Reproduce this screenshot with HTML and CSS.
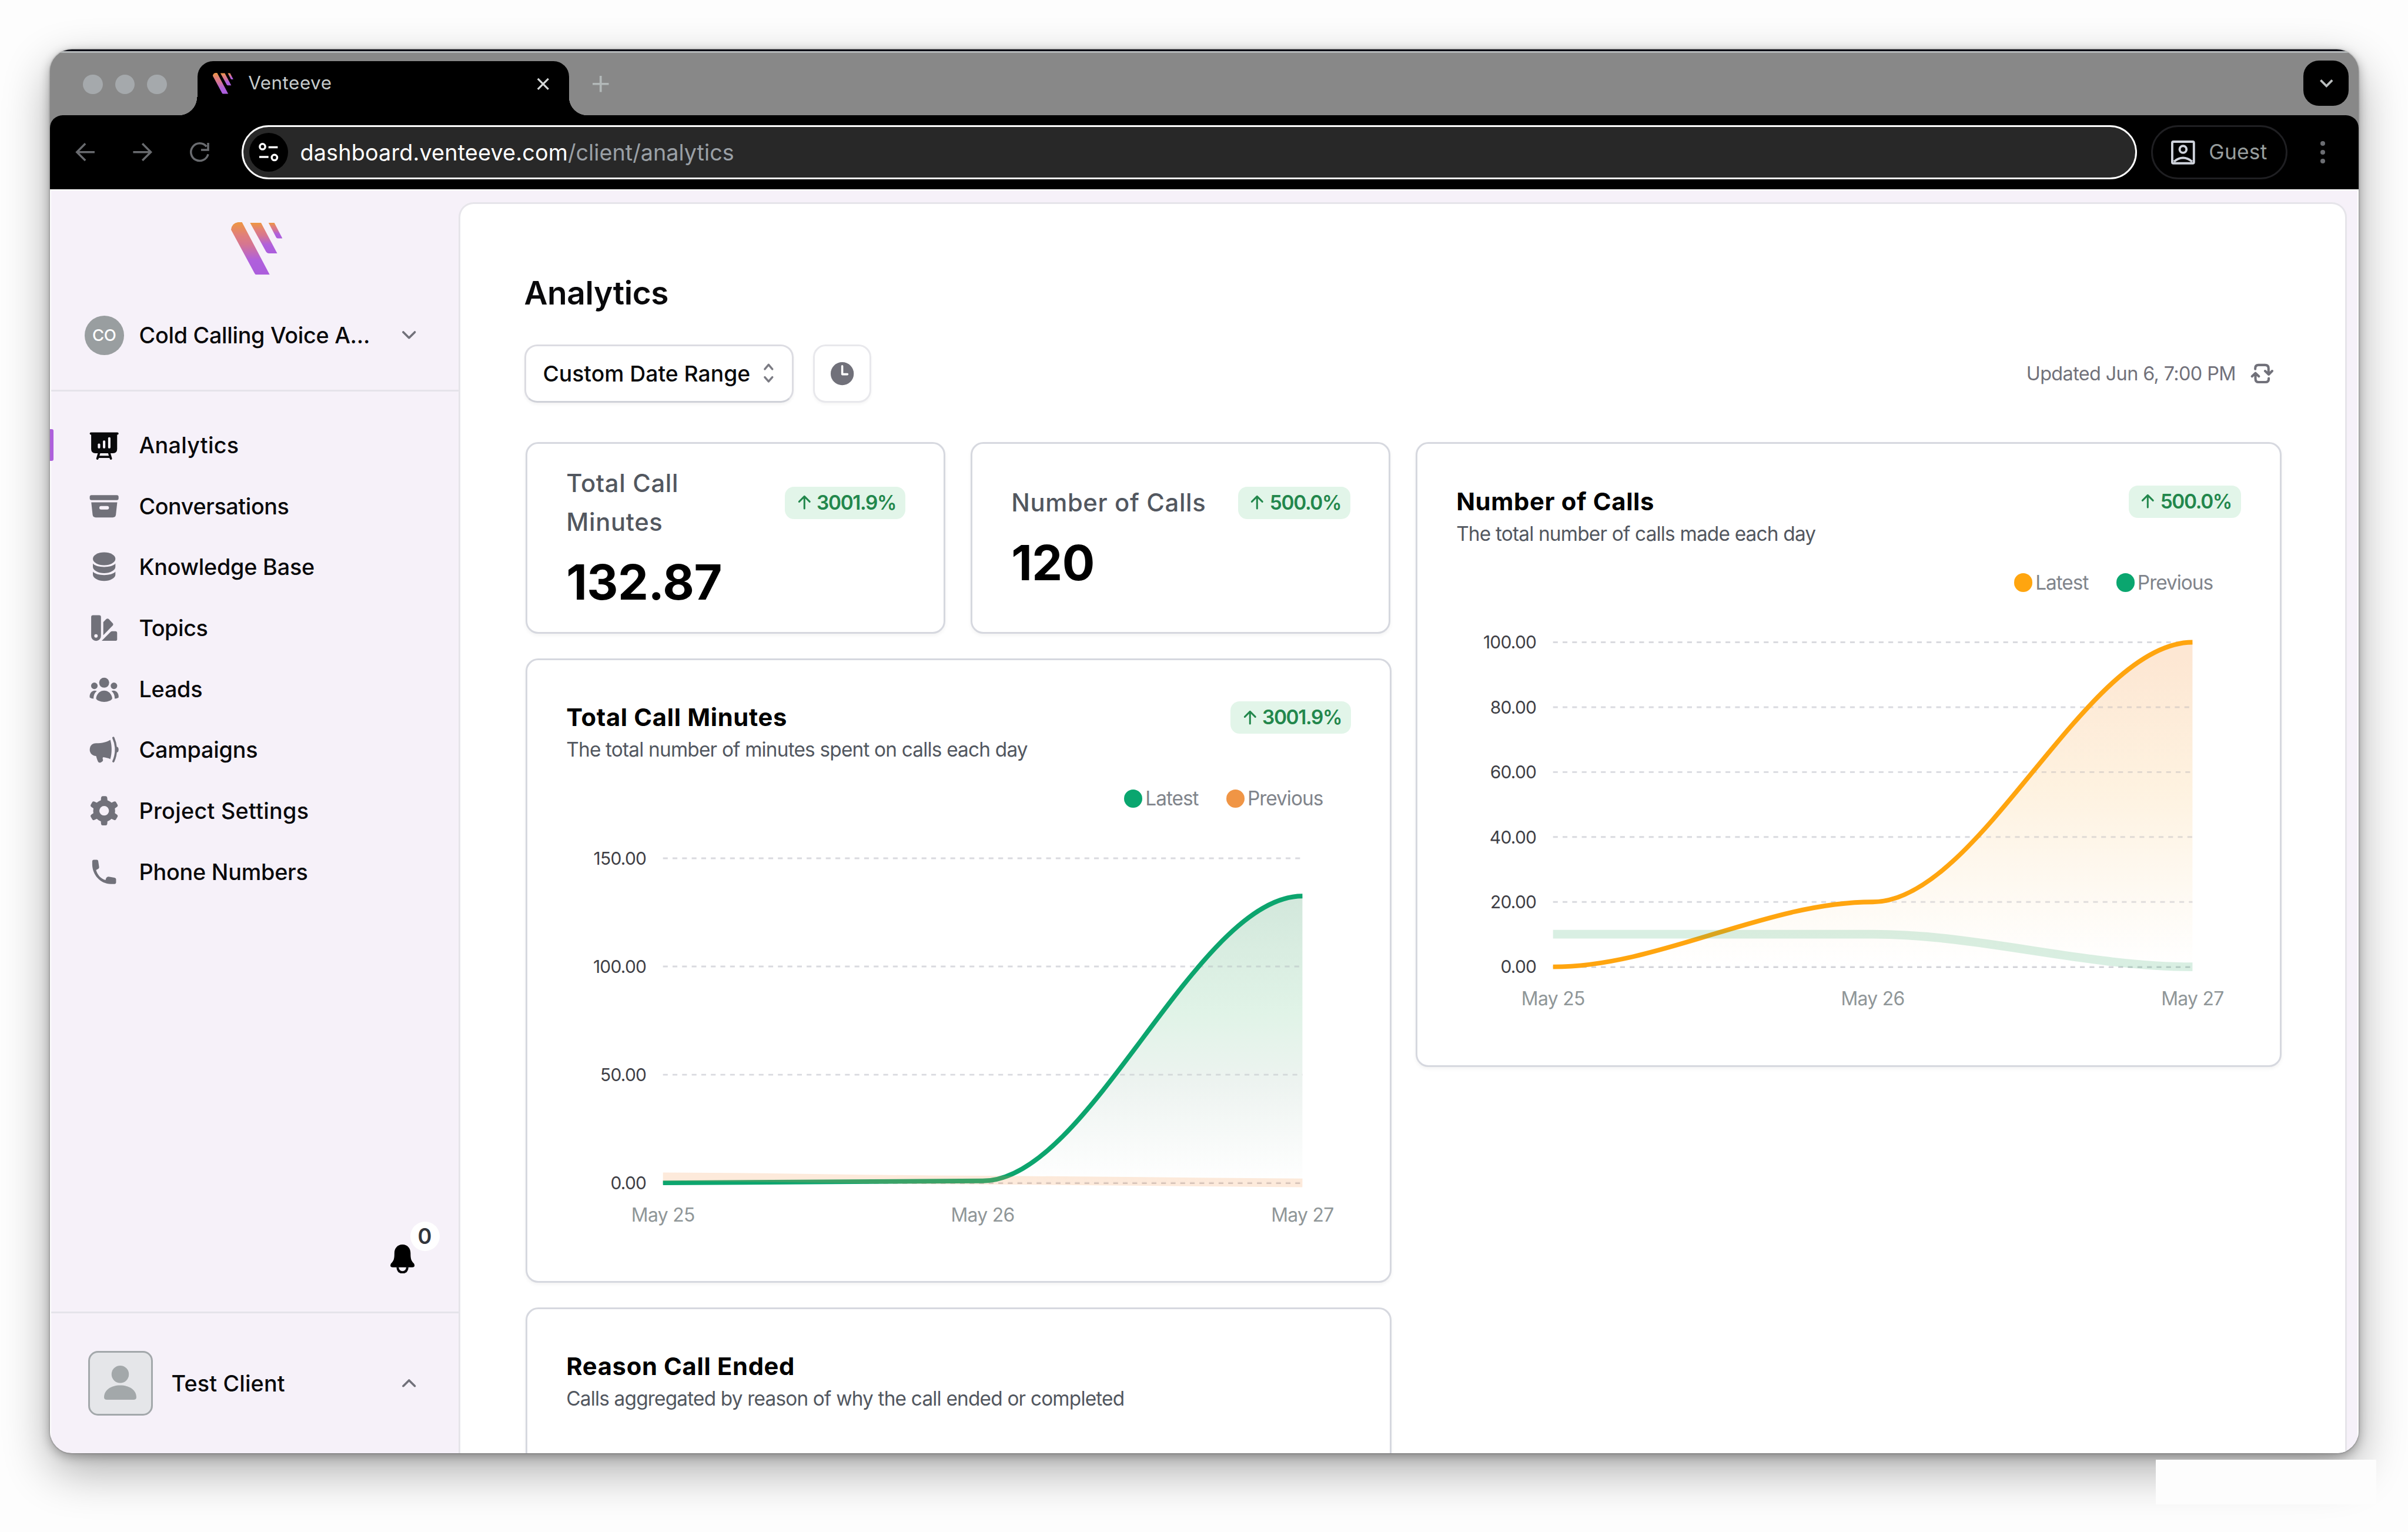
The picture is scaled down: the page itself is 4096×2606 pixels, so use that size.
FILE: index.html
```html
<!DOCTYPE html>
<html lang="en">
<head>
<meta charset="utf-8">
<title>Venteeve</title>
<link rel="stylesheet" href="styles.css">
</head>
<body>
<svg class="defs" aria-hidden="true">
  <defs>
    <linearGradient id="brand" x1="0" y1="0" x2="0" y2="1">
      <stop offset="0" stop-color="#ee9742"/><stop offset=".25" stop-color="#e07f7c"/><stop offset=".42" stop-color="#d67690"/><stop offset=".72" stop-color="#b060dc"/><stop offset="1" stop-color="#ab5ddc"/>
    </linearGradient>
    <linearGradient id="fillOrange" x1="0" y1="0" x2="0" y2="1">
      <stop offset=".05" stop-color="#fde7d3"/><stop offset=".45" stop-color="#fef2e0"/><stop offset=".75" stop-color="#fef9f1"/><stop offset="1" stop-color="#fff"/>
    </linearGradient>
    <linearGradient id="fillGreen" x1="0" y1="0" x2="0" y2="1">
      <stop offset=".02" stop-color="#d3e8dc"/><stop offset=".4" stop-color="#e0f3e7"/><stop offset=".65" stop-color="#edf3f0"/><stop offset="1" stop-color="#fff"/>
    </linearGradient>
    <symbol id="logo" viewBox="0 0 89 91">
      <path fill="url(#brand)" d="M0 13Q1 2 12 0H19L67 91H44Q42 91 40 87Z"/>
      <path fill="url(#brand)" d="M33 1H52L80 54H66Q62 54 60 50Z"/>
      <path fill="url(#brand)" d="M65 1H75L89 28H81Q79 28 78 26Z"/>
    </symbol>
    <symbol id="down" viewBox="0 0 24 14"><path d="M2 2L12 12L22 2" fill="none" stroke="currentColor" stroke-width="3.8" stroke-linecap="round" stroke-linejoin="round"/></symbol>
    <symbol id="up" viewBox="0 0 24 14"><path d="M2 12L12 2L22 12" fill="none" stroke="currentColor" stroke-width="3.8" stroke-linecap="round" stroke-linejoin="round"/></symbol>
    <symbol id="arrow-up" viewBox="0 0 24 26"><path d="M12 24V2M2.500 11.500L12 2L21.500 11.500" fill="none" stroke="currentColor" stroke-width="3.200" stroke-linecap="round" stroke-linejoin="round"/></symbol>
  </defs>
</svg>

<div class="window">
  <div class="tabstrip">
    <div class="lights"><i></i><i></i><i></i></div>
    <div class="tab">
      <svg class="tab-logo"><use href="#logo"/></svg>
      <span class="tab-title">Venteeve</span>
      <svg class="tab-close" viewBox="0 0 24 24"><path d="M2 2L22 22M22 2L2 22" stroke="#d5d8d8" stroke-width="3.600"/></svg>
    </div>
    <svg class="tab-new" viewBox="0 0 28 28"><path d="M14 0V28M0 14H28" stroke="#b2b8b8" stroke-width="3.800"/></svg>
    <div class="tab-search"><svg viewBox="0 0 24 14"><path d="M1.500 1.500L12 12L22.500 1.500" fill="none" stroke="#b9bdbe" stroke-width="4"/></svg></div>
  </div>

  <div class="toolbar">
    <svg class="nav-btn" viewBox="0 0 36 36"><path d="M35 18H3M18 2.500L2.500 18L18 33.500" fill="none" stroke="#696b6f" stroke-width="3.800"/></svg>
    <svg class="nav-btn" viewBox="0 0 36 36"><path d="M1 18H33M18 2.500L33.500 18L18 33.500" fill="none" stroke="#696b6f" stroke-width="3.800"/></svg>
    <svg class="nav-btn" viewBox="0 0 36 36"><path d="M31 8A16 16 0 1 0 34 22M34 1V14H21" fill="none" stroke="#696b6f" stroke-width="3.800"/></svg>
    <div class="url">
      <span class="site"><svg viewBox="0 0 36 34"><g fill="none" stroke="#fff" stroke-width="3.800"><circle cx="7" cy="7" r="5"/><path d="M18 8H35M1 26H18"/><circle cx="29" cy="27" r="5"/></g></svg></span>
      <span class="host">dashboard.venteeve.com</span><span class="path">/client/analytics</span>
    </div>
    <div class="guest">
      <svg viewBox="0 0 42 42"><g fill="none" stroke="#cfd3dc" stroke-width="4"><rect x="2" y="2" width="38" height="38" rx="2"/><circle cx="21" cy="15.500" r="6"/><path d="M5 37Q21 24 37 37"/></g></svg>
      <span>Guest</span>
    </div>
    <div class="dots"><i></i><i></i><i></i></div>
  </div>

  <div class="page">
    <aside class="sidebar">
      <svg class="logo"><use href="#logo"/></svg>
      <div class="project">
        <span class="initials">CO</span>
        <span class="project-name">Cold Calling Voice A...</span>
        <svg class="chev"><use href="#down"/></svg>
      </div>
      <nav class="nav">
        <a class="item active"><svg viewBox="0 0 160 160"><rect x="5" y="14" width="150" height="12" rx="6"/><path d="M12.500 20H147.500V100Q147.500 122 125.500 122H34.500Q12.500 122 12.500 100Z"/><path d="M54 120L45 150M106 120L115 150M50 141H110" fill="none" stroke="currentColor" stroke-width="12" stroke-linecap="round"/><g fill="#f6f1f9"><rect x="47" y="72" width="12.500" height="25" rx="5"/><rect x="73.500" y="56" width="12.500" height="41" rx="5"/><rect x="100.500" y="39" width="12.500" height="58" rx="5"/></g></svg><span>Analytics</span></a>
        <a class="item"><svg viewBox="0 0 160 160"><rect x="5" y="22" width="150" height="26" rx="9"/><path d="M13 60H148L141 124Q139 138 125 138H36Q22 138 20 124Z"/><rect x="55" y="79" width="50" height="18" rx="9" fill="#f6f1f9"/></svg><span>Conversations</span></a>
        <a class="item"><svg viewBox="0 0 160 160"><ellipse cx="80" cy="38" rx="58.500" ry="33.500"/><path d="M21.500 63C38 87 122 87 138.500 63V80C138.500 98 110 113 80 113S21.500 98 21.500 80Z"/><path d="M21.500 105C38 129 122 129 138.500 105V121C138.500 139 110 154 80 154S21.500 139 21.500 121Z"/></svg><span>Knowledge Base</span></a>
        <a class="item"><svg viewBox="0 0 160 160"><path d="M12.500 23Q12.500 13.500 22 13.500H54Q63.500 13.500 63.500 23V122A25.500 25.500 0 0 1 12.500 122Z"/><circle cx="37.500" cy="121.500" r="9" fill="#f6f1f9"/><path d="M75.500 50L91 34Q97.500 28 104 34L124 55Q130 61 124 68L75.500 118Z"/><path d="M67.500 147L113 101Q117 97 122 97H138Q147.500 97 147.500 106V138Q147.500 147 138 147Z"/></svg><span>Topics</span></a>
        <a class="item"><svg viewBox="0 0 160 160"><circle cx="80" cy="47" r="26"/><circle cx="29" cy="63" r="17"/><circle cx="131" cy="63" r="17"/><path d="M38 128C42 102 60 88 80 88S118 102 122 128C122 138 100 147 80 147S38 138 38 128Z"/><path d="M42 90C20 82 2 100 5 124C10 128 18 130 25 130C25 112 30 100 42 90Z"/><path d="M118 90C140 82 158 100 155 124C150 128 142 130 135 130C135 112 130 100 118 90Z"/></svg><span>Leads</span></a>
        <a class="item"><svg viewBox="0 0 160 160"><path d="M112 29C95 40 70 47 38 47C18 47 5 61 5 80C5 98 18 112 38 113C41 123 44 134 48 142C52 149 59 149 65 145C72 142 76 138 73 130C71 124 73 121 75 119C88 120 101 124 112 129C121 98 121 60 112 29Z"/><path d="M128 19Q155 80 128 141" fill="none" stroke="currentColor" stroke-width="11" stroke-linecap="round"/><ellipse cx="146" cy="80" rx="9" ry="14"/></svg><span>Campaigns</span></a>
        <a class="item"><svg viewBox="0 0 160 160"><circle cx="80" cy="80" r="57"/><g><path id="tooth" d="M58 80L64 12Q65 4 72 4H88Q95 4 96 12L102 80L96 148Q95 156 88 156H72Q65 156 64 148Z"/><use href="#tooth" transform="rotate(60 80 80)"/><use href="#tooth" transform="rotate(120 80 80)"/></g><circle cx="80" cy="80" r="25" fill="#f6f1f9"/></svg><span>Project Settings</span></a>
        <a class="item"><svg viewBox="0 0 160 160"><path d="M18 26Q18 17 27 17H42Q48 17 49 23L54 56Q54 63 46 66L38 70C45 95 62 115 87 122L90 113Q94 104 103 105L134 110Q142 112 142 118V134Q142 143 133 143H115C60 143 18 95 18 40Z"/></svg><span>Phone Numbers</span></a>
      </nav>
      <div class="alerts">
        <div class="bell">
          <svg viewBox="0 0 42 50"><path d="M21 0C12 0 7 7 7 15C7 25 6 28 1 33Q-2 39 4 39.500H38Q44 39 41 33C36 28 35 25 35 15C35 7 30 0 21 0Z"/><path d="M12.500 39Q13 48 21 48T29.500 39" fill="none" stroke="currentColor" stroke-width="4"/></svg>
          <span class="count">0</span>
        </div>
      </div>
      <div class="user">
        <span class="avatar"><svg viewBox="0 0 56 60"><circle cx="28" cy="15" r="15"/><path d="M0 55C0 42 12 34 28 34S56 42 56 55Q56 59 51 59H5Q0 59 0 55Z"/></svg></span>
        <span class="user-name">Test Client</span>
        <svg class="chev"><use href="#up"/></svg>
      </div>
    </aside>

    <main class="panel">
      <h1>Analytics</h1>
      <div class="controls">
        <div class="select"><span>Custom Date Range</span>
          <svg viewBox="0 0 17 34"><path d="M2 10L8.500 2.500L15 10M2 24L8.500 31.500L15 24" fill="none" stroke="#7b7b83" stroke-width="3.600" stroke-linecap="round" stroke-linejoin="round"/></svg>
        </div>
        <div class="clock"><svg viewBox="0 0 40 40"><circle cx="20" cy="20" r="20" fill="#71717a"/><path d="M20 7V21H29" fill="none" stroke="#fff" stroke-width="3.600" stroke-linecap="round" stroke-linejoin="round"/></svg></div>
        <div class="updated"><span>Updated Jun 6, 7:00 PM</span>
          <svg viewBox="0 0 120 120"><path d="M25 36V32Q25 15 42 15H76Q94 15 94 32V62M76 46L95 64L113 46M95 84V87Q95 104 78 104H43Q26 104 26 87V58M8 74L26 57L44 74" fill="none" stroke="#71717a" stroke-width="12.500" stroke-linecap="round" stroke-linejoin="round"/></svg>
        </div>
      </div>

      <div class="board">
        <div class="col">
          <div class="stats">
            <section class="card stat">
              <div class="stat-head"><span class="label">Total Call Minutes</span><span class="pill"><svg><use href="#arrow-up"/></svg><b>3001.9%</b></span></div>
              <div class="value">132.87</div>
            </section>
            <section class="card stat">
              <div class="stat-head"><span class="label">Number of Calls</span><span class="pill"><svg><use href="#arrow-up"/></svg><b>500.0%</b></span></div>
              <div class="value">120</div>
            </section>
          </div>

          <section class="card chart">
            <header><div><h2>Total Call Minutes</h2><p>The total number of minutes spent on calls each day</p></div><span class="pill"><svg><use href="#arrow-up"/></svg><b>3001.9%</b></span></header>
            <div class="legend"><span><i class="green"></i>Latest</span><span><i class="peach"></i>Previous</span></div>
            <svg class="plot" viewBox="3 263 1494 816">
              <path class="grid" d="M238 346.500H1346M238 534H1346M238 721.500H1346M238 909H1346"/>
              <path fill="url(#fillGreen)" d="M238 909C422 909 607 905.500 792 905.500C977 905.500 1161 412 1346 412V909Z"/>
              <path class="grid over" d="M1166 534H1346M1030 721.500H1346M238 909H1346"/>
              <path fill="none" stroke="#0ca56e" stroke-width="8" d="M238 909C422 909 607 905.500 792 905.500C977 905.500 1161 412 1346 412"/>
              <path fill="none" stroke="#f5964a" stroke-opacity=".2" stroke-width="15" d="M238 898.500C422 898.500 607 904 792 904C977 904 1161 909 1346 909"/>
              <g class="ylab"><text x="209" y="357.500">150.00</text><text x="209" y="545">100.00</text><text x="209" y="732.500">50.00</text><text x="209" y="920">0.00</text></g>
              <g class="xlab"><text x="238" y="976">May 25</text><text x="792" y="976">May 26</text><text x="1346" y="976">May 27</text></g>
            </svg>
          </section>

          <section class="card chart">
            <header><div><h2>Reason Call Ended</h2><p>Calls aggregated by reason of why the call ended or completed</p></div></header>
          </section>
        </div>

        <div class="col">
          <section class="card chart">
            <header><div><h2>Number of Calls</h2><p>The total number of calls made each day</p></div><span class="pill"><svg><use href="#arrow-up"/></svg><b>500.0%</b></span></header>
            <div class="legend"><span><i class="amber"></i>Latest</span><span><i class="green"></i>Previous</span></div>
            <svg class="plot" viewBox="3 263 1494 816">
              <path class="grid" d="M238 346H1346M238 458.500H1346M238 571H1346M238 683.500H1346M238 796H1346M238 908.500H1346"/>
              <path fill="url(#fillOrange)" d="M238 908.500C422 908.500 607 796 792 796C977 796 1161 346 1346 346V908.500Z"/>
              <path class="grid over" d="M1166 458.500H1346M1068 571H1346M972 683.500H1346M792 796H1346M238 908.500H1346"/>
              <path fill="none" stroke="#ffa50f" stroke-width="8" d="M238 908.500C422 908.500 607 796 792 796C977 796 1161 346 1346 346"/>
              <path fill="none" stroke="#2fa565" stroke-opacity=".18" stroke-width="15" d="M238 852H792C977 852 1161 908.500 1346 908.500"/>
              <g class="ylab"><text x="209" y="357">100.00</text><text x="209" y="469.500">80.00</text><text x="209" y="582">60.00</text><text x="209" y="694.500">40.00</text><text x="209" y="807">20.00</text><text x="209" y="919.500">0.00</text></g>
              <g class="xlab"><text x="238" y="975.500">May 25</text><text x="792" y="975.500">May 26</text><text x="1346" y="975.500">May 27</text></g>
            </svg>
          </section>
        </div>
      </div>
    </main>
  </div>
</div>
<div class="mark"></div>
</body>
</html>
```
FILE: styles.css
```css
/* 1rem is one hundred design units */
html { font-size: 98.178px; }
* { box-sizing: border-box; }
body {
  margin: 0;
  width: 4096px;
  height: 2606px;
  padding: .86rem 0 0 .87rem;
  overflow: hidden;
  position: relative;
  background: #fdfdfd;
  font-family: Inter, "Liberation Sans", sans-serif;
  color: #09090b;
}
svg { display: block; flex: none; overflow: visible; }
.defs { position: absolute; width: 0; height: 0; }
h1, h2, p { margin: 0; }
span, p, h2 { white-space: nowrap; }

.window {
  width: 39.99rem;
  height: 24.32rem;
  border-radius: .38rem;
  overflow: hidden;
  display: flex;
  flex-direction: column;
  background: #888;
  box-shadow: 0 0 3px rgba(0,0,0,.4), 0 5px 18px rgba(0,0,0,.3), 0 30px 80px rgba(0,0,0,.32);
}

/* browser chrome */
.tabstrip {
  height: 1.137rem;
  flex: none;
  display: flex;
  align-items: flex-start;
  border-top: 3px solid #0b0c14;
  box-shadow: inset 0 3px 0 #b3b7b8;
}
.lights { display: flex; gap: .215rem; margin: .4rem 0 0 .57rem; }
.lights i { width: .34rem; height: .34rem; border-radius: 50%; background: #a5a9ac; }
.tab {
  position: relative;
  width: 6.44rem;
  height: .937rem;
  margin: .17rem 0 0 .53rem;
  padding: 0 .34rem 0 .256rem;
  border-radius: .27rem .27rem 0 0;
  background: #000;
  display: flex;
  align-items: flex-start;
}
.tab::before, .tab::after {
  content: "";
  position: absolute;
  bottom: 0;
  width: .32rem;
  height: .32rem;
}
.tab::before { left: -.32rem; background: radial-gradient(circle at 0 0, transparent .315rem, #000 .32rem); }
.tab::after { right: -.32rem; background: radial-gradient(circle at 100% 0, transparent .315rem, #000 .32rem); }
.tab-logo { width: .375rem; height: .365rem; margin-top: .2rem; }
.tab-title { margin: 0 auto 0 .25rem; line-height: .77rem; font-size: .32rem; letter-spacing: .016em; color: #c6cbcb; }
.tab-close { width: .22rem; height: .22rem; margin-top: .28rem; }
.tab-new { width: .28rem; height: .28rem; margin: .42rem 0 0 .41rem; }
.tab-search {
  width: .785rem;
  height: .78rem;
  margin: .16rem .165rem 0 auto;
  border-radius: .27rem;
  background: #000;
  display: grid;
  place-items: center;
}
.tab-search svg { width: .23rem; height: .135rem; }
.toolbar {
  height: 1.282rem;
  flex: none;
  border-radius: .22rem .22rem 0 0;
  background: #000;
  display: flex;
  align-items: center;
  padding: 0 .575rem 0 .43rem;
}
.nav-btn { width: .35rem; height: .34rem; margin-right: .64rem; }
.nav-btn:nth-child(3) { margin-right: .56rem; }
.url {
  flex: 1;
  height: .945rem;
  border: 3px solid #fff;
  border-radius: .48rem;
  background: #282828;
  display: flex;
  align-items: center;
  padding-left: .095rem;
  font-size: .385rem;
  color: #fff;
}
.site { width: .68rem; height: .68rem; border-radius: 50%; background: #000; display: grid; place-items: center; margin-right: .205rem; }
.site svg { width: .34rem; height: .32rem; }
.host { letter-spacing: .0035em; }
.path { color: #9aa0a6; }
.guest {
  width: 2.36rem;
  height: .945rem;
  margin-left: .25rem;
  border: 3px solid #1f1f22;
  border-radius: .48rem;
  display: flex;
  align-items: center;
  padding-left: .315rem;
  gap: .24rem;
  font-size: .36rem;
  letter-spacing: .006em;
  color: #979d9d;
}
.guest svg { width: .415rem; height: .415rem; }
.dots { display: flex; flex-direction: column; gap: .07rem; margin-left: .57rem; }
.dots i { width: .085rem; height: .085rem; border-radius: 50%; background: #6b6d72; }

/* page */
.page {
  flex: 1;
  min-height: 0;
  display: flex;
  background: #f6f1f9;
  border: 2px solid #fff;
  border-bottom: 0;
}
.sidebar { width: 7.05rem; flex: none; display: flex; flex-direction: column; }
.logo { width: .89rem; height: .91rem; margin: .55rem auto 0 3.11rem; }
.project {
  height: 2.02rem;
  padding: .26rem .735rem 0 .575rem;
  border-bottom: 3px solid #e5e3ea;
  display: flex;
  align-items: center;
  font-size: .385rem;
  font-weight: 500;
  letter-spacing: -.0084em;
}
.project > * { margin-bottom: .15rem; }
.initials { width: .68rem; height: .68rem; border-radius: 50%; background: #999ea0; color: #fff; display: grid; place-items: center; font-size: .28rem; margin-right: .265rem; }
.chev { width: .24rem; height: .14rem; margin-left: auto; color: #71717a; }
.nav { padding-top: .405rem; }
.item { height: 1.056rem; display: flex; align-items: center; padding-left: .645rem; gap: .34rem; font-size: .385rem; font-weight: 500; letter-spacing: -.006em; position: relative; }
.item:nth-child(1), .item:nth-child(7) { letter-spacing: .007em; }
.item:nth-child(2), .item:nth-child(4) { letter-spacing: -.011em; }
.item svg { width: .533rem; height: .533rem; color: #71717a; fill: #71717a; }
.item.active svg { color: #09090b; fill: #09090b; }
.item.active::before { content: ""; position: absolute; left: -2px; top: .25rem; width: .06rem; height: .55rem; border-radius: 0 .03rem .03rem 0; background: #ae60dc; }
.alerts { margin-top: auto; display: flex; justify-content: flex-end; padding: 0 .76rem .655rem 0; }
.bell { position: relative; }
.bell svg { width: .42rem; height: .5rem; }
.count { position: absolute; left: .345rem; top: -.4rem; width: .51rem; height: .51rem; border-radius: 50%; background: #fff; display: grid; place-items: center; font-size: .37rem; font-weight: 600; color: #33363c; }
.user { height: 2.46rem; border-top: 3px solid #e5e3ea; display: flex; align-items: center; padding: 0 .735rem 0 .635rem; font-size: .385rem; font-weight: 500; letter-spacing: .0035em; }
.avatar { width: 1.12rem; height: 1.12rem; border: 3px solid #a3a8ab; border-radius: .17rem; background: #e5e6e9; display: grid; place-items: center; margin-right: .325rem; }
.avatar svg { width: .56rem; height: .6rem; fill: #a3a8aa; }

.panel {
  flex: 1;
  min-width: 0;
  margin: .2rem .175rem 0 0;
  border: 3px solid #e6e5ea;
  border-bottom: 0;
  border-radius: .26rem .26rem 0 0;
  background: #fff;
  padding: 1.25rem 1.1rem 0 1.14rem;
  overflow: hidden;
}
h1 { font-size: .56rem; line-height: .6rem; font-weight: 600; letter-spacing: -.0076em; margin-left: -.03rem; }
.controls { display: flex; height: 1.01rem; margin-top: .585rem; font-size: .38rem; font-weight: 500; }
.select { width: 4.67rem; border: 3px solid #dcdce2; border-bottom-color: #cfd1d8; border-radius: .22rem; box-shadow: 0 3px 5px rgba(0,0,0,.05); display: flex; align-items: center; justify-content: space-between; padding: 0 .32rem 0 .295rem; margin-left: -.03rem; }
.select svg { width: .17rem; height: .34rem; }
.clock { width: 1rem; margin-left: .34rem; border: 3px solid #e8e8ec; border-radius: .22rem; box-shadow: 0 3px 5px rgba(0,0,0,.04); display: grid; place-items: center; }
.clock svg { width: .4rem; height: .4rem; }
.updated { margin: 0 .14rem 0 auto; display: flex; align-items: center; gap: .26rem; font-size: .33rem; font-weight: 400; letter-spacing: -.019em; color: #71717a; }
.updated svg { width: .4rem; height: .4rem; }

.board { display: flex; gap: .42rem; margin-top: .69rem; align-items: flex-start; }
.col { width: 15rem; flex: none; display: flex; flex-direction: column; gap: .42rem; }
.card { border: 3px solid #d6d8df; border-radius: .22rem; background: #fff; box-shadow: 0 3px 6px rgba(0,0,0,.05); }
.stats { display: flex; justify-content: space-between; padding-right: .02rem; }
.stat { width: 7.27rem; height: 3.32rem; padding: 0 .66rem 0 .67rem; display: flex; flex-direction: column; justify-content: center; }
.stat-head { display: flex; align-items: center; justify-content: space-between; gap: .5rem; }
.label { font-size: .425rem; line-height: .675rem; font-weight: 500; letter-spacing: .016em; color: #52575f; white-space: normal; }
.value { font-size: .84rem; line-height: 1.06rem; margin-top: .17rem; font-weight: 700; letter-spacing: -.0055em; color: #000; }
.pill { height: .56rem; flex: none; display: flex; align-items: center; gap: .1rem; padding: 0 .165rem 0 .22rem; border-radius: .16rem; background: #e2f5e9; color: #22874c; font-size: .34rem; letter-spacing: -.04em; }
.pill b { font-weight: 600; }
.pill svg { width: .23rem; height: .26rem; }
.chart { height: 10.825rem; display: flex; flex-direction: column; }
.chart header { height: 1.83rem; padding: .695rem .67rem 0 .67rem; display: flex; justify-content: space-between; align-items: flex-start; }
.chart .pill { margin-top: .02rem; }
h2 { font-size: .425rem; line-height: .6rem; font-weight: 700; letter-spacing: .016em; color: #000; }
p { font-size: .34rem; line-height: .5rem; margin-top: .015rem; letter-spacing: -.0245em; color: #52575f; }
.legend { height: .4rem; margin-top: .37rem; padding-right: 1.16rem; display: flex; justify-content: flex-end; gap: .48rem; font-size: .34rem; letter-spacing: -.03em; color: #80848b; }
.legend > span { display: flex; align-items: center; gap: .05rem; }
.legend i { width: .32rem; height: .32rem; border-radius: 50%; }
.green { background: #0aa66f; }
.peach { background: #f09545; }
.amber { background: #ffa50f; }
.plot { width: 100%; }
.grid { fill: none; stroke: #d9dadf; stroke-width: 3; stroke-dasharray: 8.300 8.300; }
.grid.over { stroke: #9a9aa8; stroke-opacity: .3; }
.ylab text { font-size: 30.500px; letter-spacing: -.025em; text-anchor: end; fill: #3f3f46; }
.xlab text { font-size: 32.500px; letter-spacing: -.022em; text-anchor: middle; fill: #8f9698; }

/* pale label area under the window */
.mark { position: absolute; left: 37.35rem; top: 25.29rem; width: 3.82rem; height: .78rem; background: #fdfdfd; }
```
